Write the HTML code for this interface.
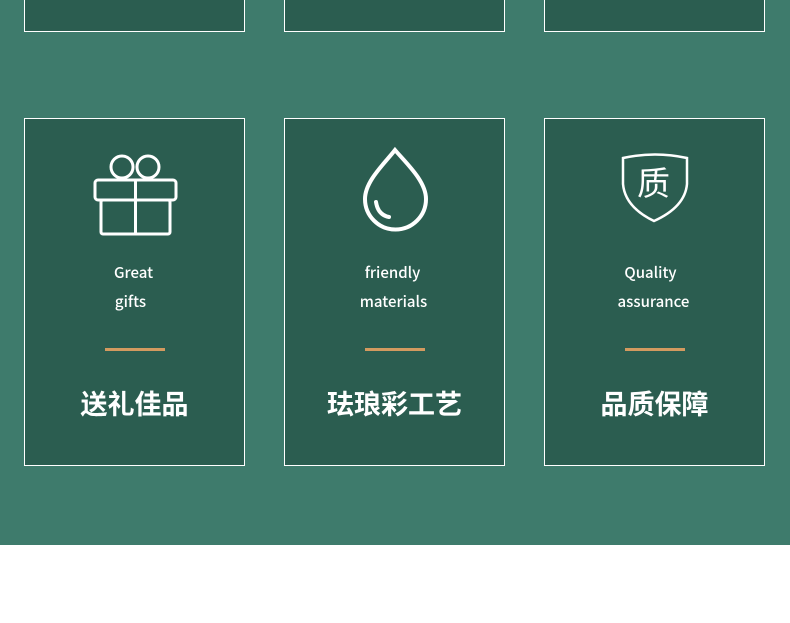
<!DOCTYPE html>
<html><head><meta charset="utf-8"><style>
body{margin:0;width:790px;height:623px;background:#fff;position:relative;overflow:hidden;font-family:"Noto Sans CJK SC","Liberation Sans",sans-serif}
.bg{position:absolute;left:0;top:0;width:790px;height:545px;background:#3e7b6c}
.c{position:absolute;width:219px;background:#2b5d50;border:1px solid #fff}
.t{position:absolute;left:0;width:100%;text-align:center;color:#fff;font-size:15px;font-weight:500;line-height:20px}
.ln{position:absolute;left:80px;top:229px;width:60px;height:3px;background:#d39a5f}
.h{position:absolute;top:264px;left:0;width:100%;text-align:center;color:#fff;font-size:27px;font-weight:bold;font-family:"Noto Sans CJK SC",sans-serif;line-height:40px}
svg{position:absolute;left:0;top:0}
</style></head><body>
<div class="bg"></div>
<div class="c" style="left:24px;top:-2px;height:32px"></div>
<div class="c" style="left:284px;top:-2px;height:32px"></div>
<div class="c" style="left:544px;top:-2px;height:32px"></div>

<div class="c" style="left:24px;top:118px;height:346px">
<svg width="219" height="346" fill="none" stroke="#fff" stroke-width="3">
<circle cx="97" cy="48" r="11"/><circle cx="123" cy="48" r="11"/>
<rect x="70" y="61" width="81" height="20" rx="3"/>
<rect x="76" y="81" width="69" height="34" rx="2"/>
<line x1="110.5" y1="61" x2="110.5" y2="115"/>
</svg>
<div class="t" style="top:144px;left:-1px">Great</div>
<div class="t" style="top:173px;left:-4px">gifts</div>
<div class="ln"></div><div class="h">送礼佳品</div></div>

<div class="c" style="left:284px;top:118px;height:346px">
<svg width="219" height="346" fill="none" stroke="#fff" stroke-width="4" stroke-linecap="round">
<path d="M110 31 C100 44 80 62 80 80 A30 30 0 0 0 141 80 C141 62 121 44 110 31 Z"/>
<path d="M91 83 Q93 96 104 98"/>
</svg>
<div class="t" style="top:144px;left:-2px">friendly</div>
<div class="t" style="top:173px;left:-1px">materials</div>
<div class="ln"></div><div class="h">珐琅彩工艺</div></div>

<div class="c" style="left:544px;top:118px;height:346px">
<svg width="219" height="346" fill="none" stroke="#fff" stroke-width="2.5">
<path d="M78 39 Q110 32 142 39 L142 65 Q140 88 109 102 Q80 88 78 65 Z"/>
</svg>
<div style="position:absolute;left:86px;top:40px;width:45px;text-align:center;color:#fff;font-size:33px;font-family:'Noto Sans CJK SC',sans-serif;font-weight:400;line-height:45px">质</div>
<div class="t" style="top:144px;left:-4px">Quality</div>
<div class="t" style="top:173px;left:-1px">assurance</div>
<div class="ln"></div><div class="h">品质保障</div></div>
</body></html>
